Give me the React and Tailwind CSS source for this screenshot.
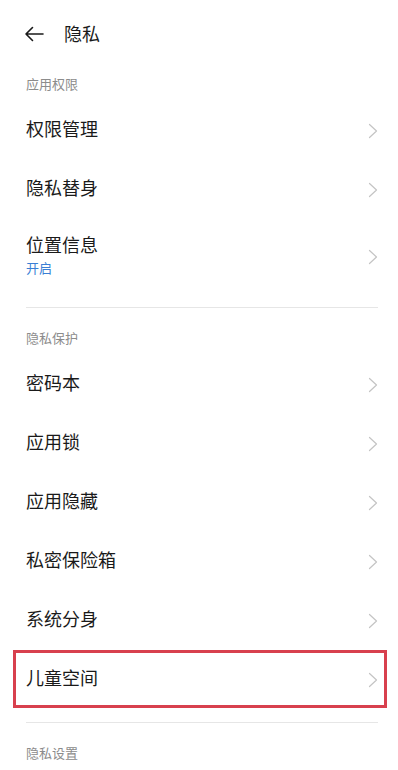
import React from "react";

const font = { fontFamily: '"Noto Sans CJK SC", "Noto Sans", sans-serif' };

const Chevron = () => (
  <svg width="10" height="16" viewBox="0 0 10 16" fill="none" className="shrink-0">
    <path d="M1.5 1.5L8.5 8L1.5 14.5" stroke="#c4c4c4" strokeWidth="1.2" strokeLinecap="round" strokeLinejoin="round" />
  </svg>
);

const Row = ({ title, sub, tall, boxed }) => (
  <div className={`relative flex items-center justify-between pl-[26px] pr-[20px] ${tall ? "h-[75px]" : "h-[59px]"}`}>
    <div className="flex flex-col mb-[5px]">
      <div className="text-[18px] leading-[24px] text-[#1a1a1a]">{title}</div>
      {sub && <div className="text-[13px] leading-[18px] mt-[3px] text-[#3a7fd5]">{sub}</div>}
    </div>
    <Chevron />
    {boxed && (
      <div className="absolute left-[13px] right-[11px] top-0 bottom-[1px] border-[3px] border-[#d8404e]" />
    )}
  </div>
);

const Section = ({ children, first }) => (
  <div className={`pl-[26px] text-[13px] leading-[18px] text-[#8c8c8c] ${first ? "pt-[7px] pb-[8px]" : "pt-[21px] pb-[8px]"}`}>
    {children}
  </div>
);

const Divider = () => (
  <div className="pt-[13px]">
    <div className="mx-[26px] mr-[20px] h-px bg-[#e6e6e6]" />
  </div>
);

export default function App() {
  return (
    <div className="w-[398px] h-[770px] bg-white overflow-hidden" style={font}>
      <div className="h-[68px] flex items-center pl-[24px]">
        <svg width="20" height="16" viewBox="0 0 20 16" fill="none">
          <path d="M19 8H2M8.5 1.5L2 8l6.5 6.5" stroke="#1a1a1a" strokeWidth="1.6" strokeLinecap="round" strokeLinejoin="round" />
        </svg>
        <div className="ml-[20px] mb-[2px] text-[18px] text-[#1a1a1a]">隐私</div>
      </div>

      <Section first>应用权限</Section>
      <Row title="权限管理" />
      <Row title="隐私替身" />
      <Row title="位置信息" sub="开启" tall />
      <Divider />

      <Section>隐私保护</Section>
      <Row title="密码本" />
      <Row title="应用锁" />
      <Row title="应用隐藏" />
      <Row title="私密保险箱" />
      <Row title="系统分身" />
      <Row title="儿童空间" boxed />
      <Divider />

      <Section>隐私设置</Section>
    </div>
  );
}
